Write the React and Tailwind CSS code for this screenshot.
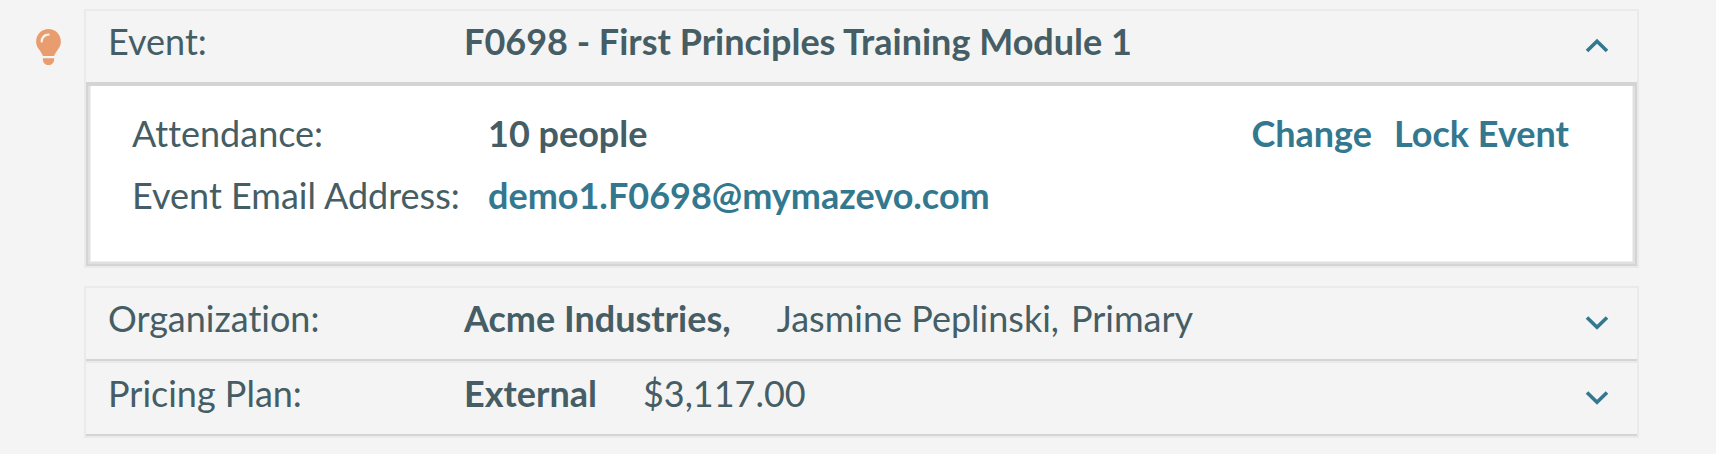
import { useState } from "react";
import { FaLightbulb } from "react-icons/fa6";

function Chevron({ open }) {
  return (
    <svg viewBox="0 0 24 24" className="h-6 w-6 shrink-0 text-[#33788f]" fill="none" stroke="currentColor" strokeWidth="3.6" aria-hidden="true">
      <path d={open ? "M2 17 L12 7.2 L22 17" : "M2 6.5 L12 16.3 L22 6.5"} />
    </svg>
  );
}

function SectionHeader({ label, open, onToggle, children }) {
  return (
    <button
      type="button"
      aria-expanded={open}
      onClick={onToggle}
      className="flex w-full items-start pt-[6px] pr-7 pb-[17px] pl-[22px] text-left"
    >
      <span className="w-[356px] shrink-0">{label}</span>
      <span className="flex grow flex-wrap">{children}</span>
      <span className="-mb-[10px] flex h-[58px] items-center">
        <Chevron open={open} />
      </span>
    </button>
  );
}

function DetailRow({ label, children }) {
  return (
    <div className="flex">
      <dt className="w-[356px] shrink-0">{label}</dt>
      <dd className="font-bold">{children}</dd>
    </div>
  );
}

const LINK = "font-bold text-[#33788f] hover:underline";

export default function App() {
  const [open, setOpen] = useState("event");
  const toggle = (key) => setOpen(open === key ? null : key);

  return (
    <main className="flex min-h-screen bg-[#f4f4f4] pt-[9px] pr-[77px] font-['Lato',sans-serif] text-4xl leading-[48px] text-[#455d64] [font-variant-ligatures:none]">
      {/* Hint column */}
      <div className="w-[84px] shrink-0 pt-5 pl-[35px]">
        <FaLightbulb className="h-9 w-[27px] text-[#e99d6f]" aria-hidden="true" />
      </div>

      <div className="flex min-w-0 grow flex-col gap-[18px]">
        {/* Event */}
        <section className="border-2 border-[#eaeaea]">
          <SectionHeader label="Event:" open={open === "event"} onToggle={() => toggle("event")}>
            <strong className="font-bold">F0698 - First Principles Training Module 1</strong>
          </SectionHeader>
          {open === "event" && (
            <div className="border-2 border-t-4 border-[#d4d4d4]">
              <div className="flex items-start justify-between border-2 border-t-0 border-[#e0e0e0] bg-white pt-[23px] pr-16 pb-[43px] pl-[42px] shadow-[inset_1px_0_#f0f0f0,inset_-1px_-1px_#f0f0f0]">
                <dl className="flex flex-col gap-[14px]">
                  <DetailRow label="Attendance:">10 people</DetailRow>
                  <DetailRow label="Event Email Address:">
                    <a href="mailto:demo1.F0698@mymazevo.com" className={LINK}>demo1.F0698@mymazevo.com</a>
                  </DetailRow>
                </dl>
                <div className="flex gap-[22px]">
                  <button type="button" className={LINK}>Change</button>
                  <button type="button" className={LINK}>Lock Event</button>
                </div>
              </div>
            </div>
          )}
        </section>

        {/* Organization and pricing */}
        <section className="border-2 border-b-0 border-[#eaeaea]">
          <div className="border-b-2 border-[#eaeaea]">
            <div className="border-b-2 border-[#d4d4d4]">
              <SectionHeader label="Organization:" open={open === "org"} onToggle={() => toggle("org")}>
                <strong className="mr-[46px] font-bold">Acme Industries,</strong>
                <span className="mr-3">Jasmine Peplinski,</span>
                <span>Primary</span>
              </SectionHeader>
            </div>
          </div>
          <div className="border-b-2 border-[#eaeaea]">
            <div className="border-b-2 border-[#d4d4d4]">
              <SectionHeader label="Pricing Plan:" open={open === "pricing"} onToggle={() => toggle("pricing")}>
                <strong className="mr-[46px] font-bold">External</strong>
                <span>$3,117.00</span>
              </SectionHeader>
            </div>
          </div>
        </section>
      </div>
    </main>
  );
}
